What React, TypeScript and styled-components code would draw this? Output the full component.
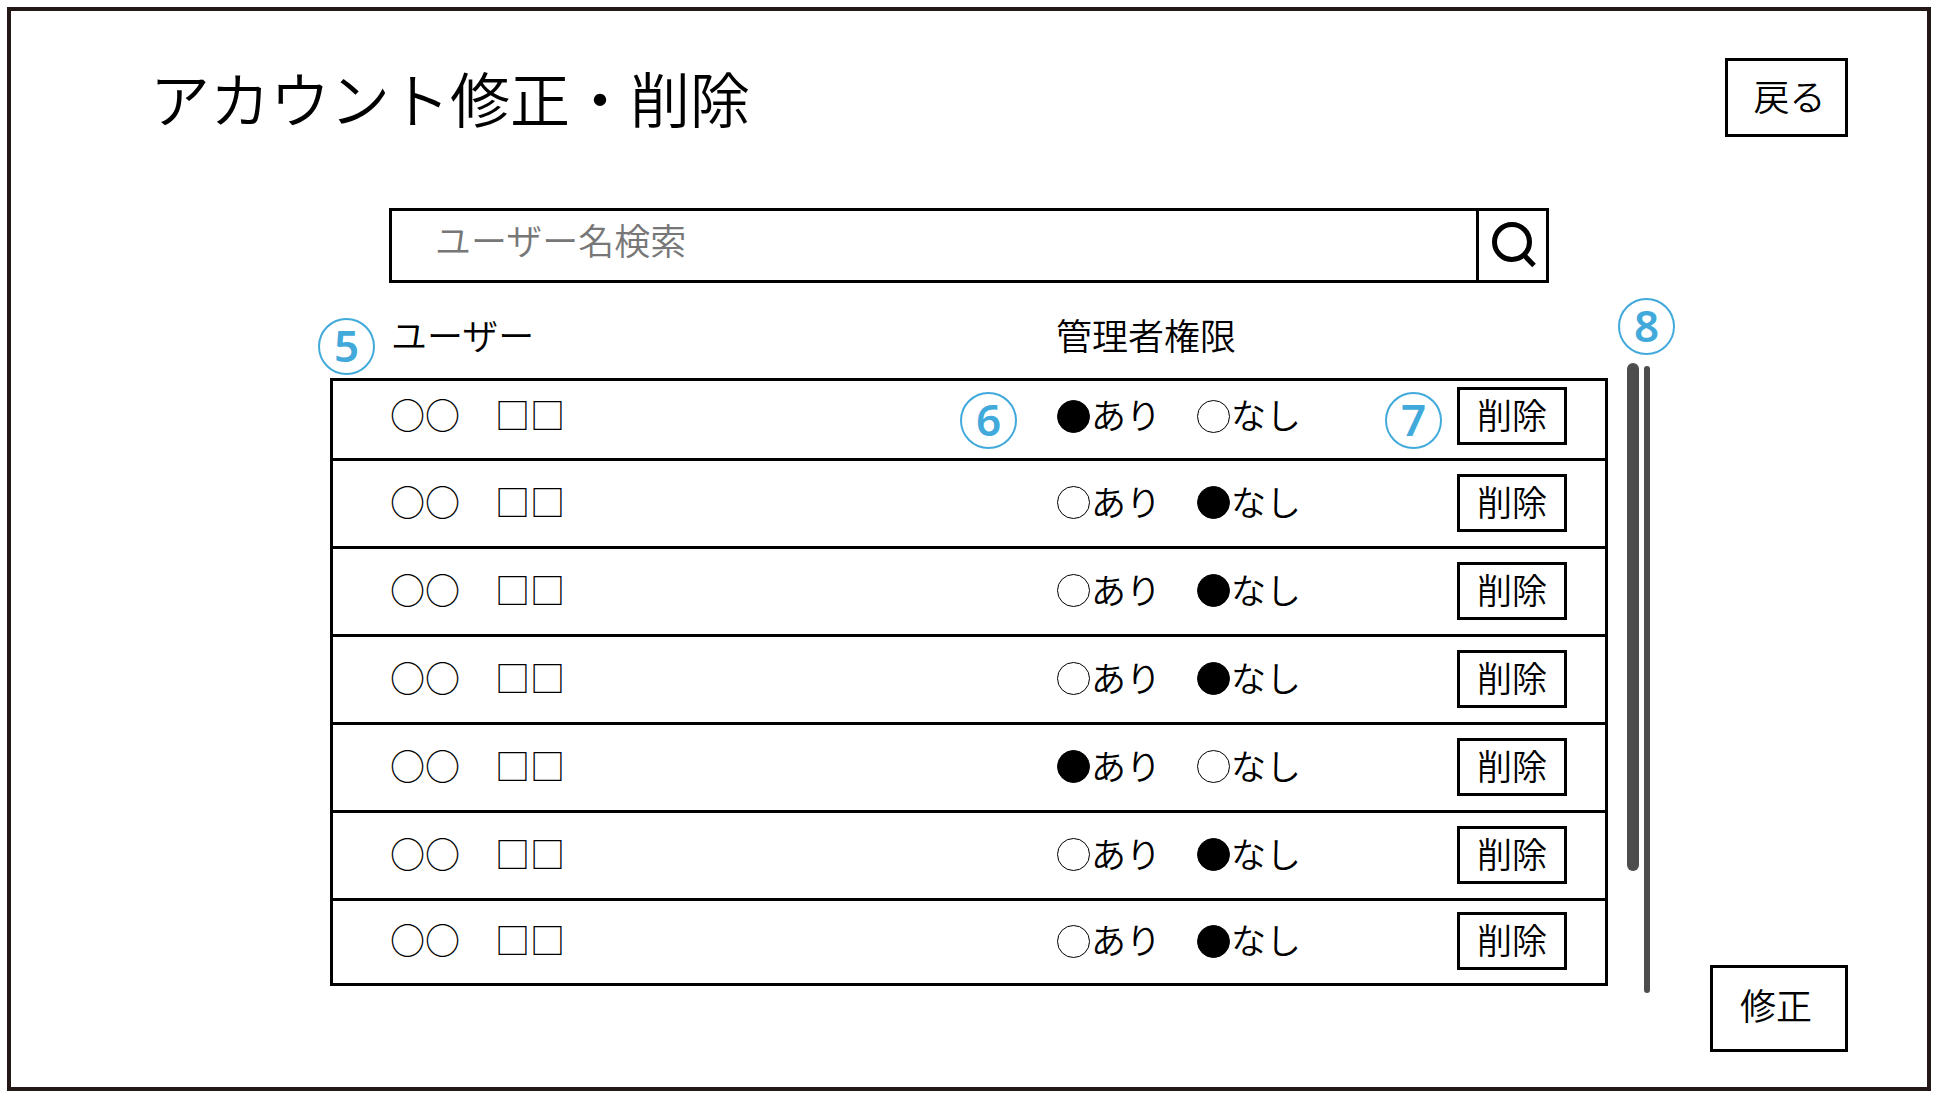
import React from "react";
import styled, { createGlobalStyle } from "styled-components";

const INK = "#000";
const BLUE = "#42aadb";
const RAIL = "#4d4d4d";

const GlobalStyle = createGlobalStyle`
  *, *::before, *::after { box-sizing: border-box; }
  body {
    margin: 0;
    padding: 7px;
    background: #fff;
    color: ${INK};
    font-family: "Noto Sans CJK JP", "Noto Sans", sans-serif;
    font-weight: 350;
  }
  button, input { font: inherit; color: inherit; }
`;

const Frame = styled.div`
  border: 4px solid #231815;
  padding: 47px 0 35px;
`;

const Header = styled.header`
  display: flex;
  justify-content: space-between;
  align-items: flex-start;
  padding: 0 79px 0 139px;
`;

const Title = styled.h1`
  margin: 0;
  font-size: 60px;
  line-height: 78px;
  font-weight: 350;
`;

const BoxButton = styled.button<{ $size: "small" | "medium" | "large" }>`
  display: block;
  border: 3px solid ${INK};
  background: #fff;
  line-height: 48px;
  cursor: pointer;
  font-size: ${({ $size }) => ($size === "small" ? 35 : 36)}px;
  width: ${({ $size }) => ({ small: 110, medium: 123, large: 138 })[$size]}px;
  height: ${({ $size }) => ({ small: 58, medium: 79, large: 87 })[$size]}px;
  padding: ${({ $size }) =>
    ({ small: "0 0 5px", medium: "0 0 6px 6px", large: "0 6px 9px 0" })[$size]};
`;

const Search = styled.form`
  display: flex;
  height: 75px;
  margin: 71px 378px 0;
  border: 3px solid ${INK};
`;

const SearchInput = styled.input`
  flex: 1;
  min-width: 0;
  border: 0;
  outline: 0;
  background: transparent;
  padding: 0 16px 14px 43px;
  font-size: 36px;
  &::placeholder { color: #777; opacity: 1; }
`;

const SearchButton = styled.button`
  display: flex;
  align-items: center;
  justify-content: center;
  width: 70px;
  padding: 0 0 2px 2px;
  border: 0;
  border-left: 3px solid ${INK};
  background: #fff;
  cursor: pointer;
`;

const Content = styled.main`
  display: flex;
  padding: 0 79px 0 319px;
`;

const Panel = styled.div`
  flex: 1;
  min-width: 0;
  padding-bottom: 66px;
`;

const UserTable = styled.table`
  width: 100%;
  table-layout: fixed;
  border-collapse: separate;
  border-spacing: 0;
`;

const Col = styled.col<{ $width?: number }>`
  width: ${({ $width }) => ($width ? `${$width}px` : "auto")};
`;

const HeadCell = styled.th<{ $indent?: number }>`
  position: relative;
  height: 95px;
  padding: 6px 0 0 ${({ $indent = 0 }) => $indent}px;
  font-size: 36px;
  line-height: 48px;
  font-weight: 350;
  text-align: left;
`;

const Cell = styled.td`
  position: relative;
  height: 88px;
  padding: 0 0 2px;
  border-top: 3px solid ${INK};
  font-size: 35px;
  line-height: 48px;
  vertical-align: middle;
  white-space: nowrap;

  &:first-child {
    border-left: 3px solid ${INK};
    padding-left: 57px;
  }
  &:last-child { border-right: 3px solid ${INK}; }
  tr:first-child > & { height: 80px; padding-bottom: 7px; }
  tr:last-child > & { border-bottom: 3px solid ${INK}; }
`;

const CellText = styled.div`
  padding-bottom: 4px;
`;

const Choices = styled.div`
  display: flex;
  gap: 35px;
`;

const Choice = styled.label`
  display: flex;
  align-items: center;
  cursor: pointer;
`;

const ChoiceText = styled.span`
  padding-bottom: 4px;
`;

const Radio = styled.input`
  appearance: none;
  flex: none;
  width: 33px;
  height: 33px;
  margin: 0 1px;
  border: 1px solid ${INK};
  border-radius: 50%;
  background: #fff;
  cursor: pointer;
  &:checked { background: ${INK}; }
`;

const Badge = styled.span<{ $left: number; $top: number }>`
  position: absolute;
  left: ${({ $left }) => $left}px;
  top: ${({ $top }) => $top}px;
  width: 57px;
  height: 57px;
  border: 2px solid ${BLUE};
  border-radius: 50%;
  color: ${BLUE};
  font-family: "Noto Sans", sans-serif;
  font-size: 44px;
  line-height: 50px;
  font-weight: 600;
  text-align: center;
`;

const Rails = styled.div`
  position: relative;
  display: flex;
  gap: 5px;
  margin-left: 19px;
  padding: 80px 0 59px;
`;

const Thumb = styled.div`
  width: 12px;
  height: 508px;
  border-radius: 6px;
  background: ${RAIL};
`;

const Track = styled.div`
  width: 6px;
  margin-top: 3px;
  border-radius: 3px;
  background: ${RAIL};
`;

const Actions = styled.div`
  display: flex;
  align-items: flex-end;
  margin-left: 60px;
`;

const admins = [true, false, false, false, true, false, false];

function SearchIcon() {
  return (
    <svg width="44" height="46" viewBox="0 0 44 46" fill="none" stroke={INK} strokeWidth="5" aria-hidden="true">
      <circle cx="20" cy="20" r="17.5" />
      <path d="M31.5 32.5 42 43.5" />
    </svg>
  );
}

function UserRow({ index, admin }: { index: number; admin: boolean }) {
  const first = index === 0;
  return (
    <tr>
      <Cell>
        <CellText>○○　□□</CellText>
      </Cell>
      <Cell>
        {first && <Badge $left={-96} $top={11}>6</Badge>}
        <Choices role="radiogroup" aria-label="管理者権限">
          <Choice>
            <Radio type="radio" name={`admin-${index}`} value="yes" defaultChecked={admin} />
            <ChoiceText>あり</ChoiceText>
          </Choice>
          <Choice>
            <Radio type="radio" name={`admin-${index}`} value="no" defaultChecked={!admin} />
            <ChoiceText>なし</ChoiceText>
          </Choice>
        </Choices>
      </Cell>
      <Cell>
        {first && <Badge $left={-72} $top={11}>7</Badge>}
        <BoxButton type="button" $size="small">削除</BoxButton>
      </Cell>
    </tr>
  );
}

export default function App() {
  return (
    <>
      <GlobalStyle />
      <Frame>
        <Header>
          <Title>アカウント修正・削除</Title>
          <BoxButton type="button" $size="medium">戻る</BoxButton>
        </Header>
        <Search role="search" onSubmit={(e) => e.preventDefault()}>
          <SearchInput type="text" placeholder="ユーザー名検索" aria-label="ユーザー名検索" />
          <SearchButton type="submit" aria-label="検索">
            <SearchIcon />
          </SearchButton>
        </Search>
        <Content>
          <Panel>
            <UserTable>
              <colgroup>
                <Col />
                <Col $width={401} />
                <Col $width={151} />
              </colgroup>
              <thead>
                <tr>
                  <HeadCell scope="col" $indent={61}>
                    <Badge $left={-12} $top={35}>5</Badge>
                    ユーザー
                  </HeadCell>
                  <HeadCell scope="col">管理者権限</HeadCell>
                  <HeadCell as="td" />
                </tr>
              </thead>
              <tbody>
                {admins.map((admin, i) => (
                  <UserRow key={i} index={i} admin={admin} />
                ))}
              </tbody>
            </UserTable>
          </Panel>
          <Rails>
            <Badge $left={-9} $top={15}>8</Badge>
            <Thumb />
            <Track />
          </Rails>
          <Actions>
            <BoxButton type="button" $size="large">修正</BoxButton>
          </Actions>
        </Content>
      </Frame>
    </>
  );
}
